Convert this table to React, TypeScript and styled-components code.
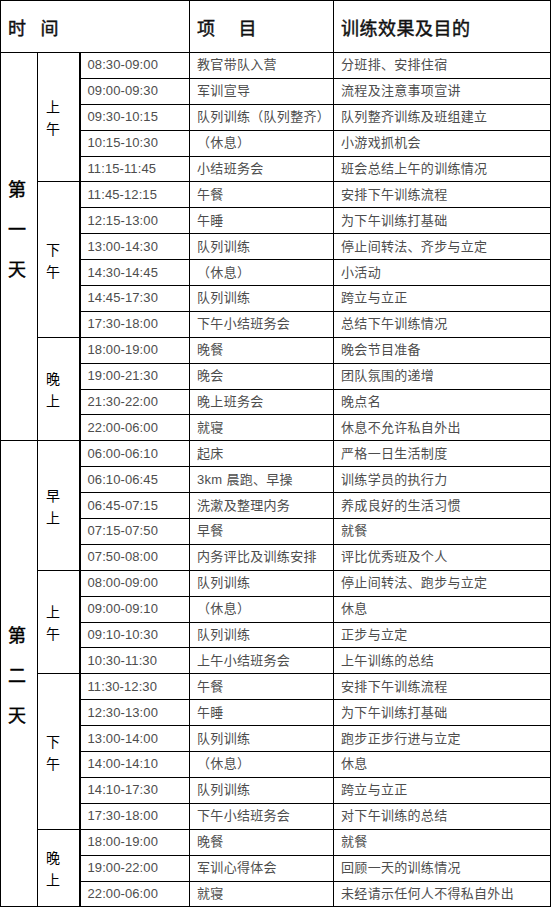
import React from 'react';
import styled, { createGlobalStyle } from 'styled-components';

const GlobalStyle = createGlobalStyle`
  html, body {
    margin: 0;
    padding: 0;
    background: #ffffff;
  }
  body {
    font-family: "Liberation Sans", "Noto Sans CJK SC", sans-serif;
  }
`;

const Table = styled.table`
  width: 550px;
  border-collapse: collapse;
  table-layout: fixed;
  border: 1px solid #000;
`;

const HeadCell = styled.th`
  height: 51px;
  padding: 0 0 0 7px;
  border: 1px solid #000;
  text-align: left;
  font-family: "Noto Sans CJK SC", sans-serif;
  font-size: 18px;
  font-weight: 400;
  -webkit-text-stroke: 0.45px #111;
  color: #111;
  letter-spacing: 0.5px;
`;

const Gap = styled.span<{ $w: number }>`
  display: inline-block;
  width: ${(p) => p.$w}px;
`;

const Row = styled.tr`
  height: 25.9px;
`;

const DayCell = styled.td<{ $shift?: number }>`
  padding: 0 0 ${(p) => p.$shift || 0}px 7px;
  border: 1px solid #000;
  vertical-align: middle;
  font-family: "Noto Sans CJK SC", sans-serif;
  font-size: 18px;
  font-weight: 400;
  -webkit-text-stroke: 0.45px #000;
  line-height: 40px;
  color: #000;
`;

const PeriodCell = styled.td`
  padding: 0 0 0 8px;
  border: 1px solid #000;
  border-right: 2px solid #000;
  vertical-align: middle;
  font-family: "Noto Sans CJK SC", sans-serif;
  font-size: 14px;
  line-height: 22px;
  color: #000;
`;

const Cell = styled.td`
  padding: 0 0 0 7px;
  border: 1px solid #000;
  font-size: 13px;
  line-height: 16px;
  color: #4d4d4d;
  letter-spacing: 0.3px;
  white-space: nowrap;
  overflow: hidden;
`;

const TimeCell = styled(Cell)`
  letter-spacing: 0.1px;
`;

type Item = [string, string, string];

interface Period {
  label: string[];
  items: Item[];
}

interface Day {
  label: string[];
  shift: number;
  periods: Period[];
}

const days: Day[] = [
  {
    label: ['第', '一', '天'],
    shift: 38,
    periods: [
      {
        label: ['上', '午'],
        items: [
          ['08:30-09:00', '教官带队入营', '分班排、安排住宿'],
          ['09:00-09:30', '军训宣导', '流程及注意事项宣讲'],
          ['09:30-10:15', '队列训练（队列整齐）', '队列整齐训练及班组建立'],
          ['10:15-10:30', '（休息）', '小游戏抓机会'],
          ['11:15-11:45', '小结班务会', '班会总结上午的训练情况'],
        ],
      },
      {
        label: ['下', '午'],
        items: [
          ['11:45-12:15', '午餐', '安排下午训练流程'],
          ['12:15-13:00', '午睡', '为下午训练打基础'],
          ['13:00-14:30', '队列训练', '停止间转法、齐步与立定'],
          ['14:30-14:45', '（休息）', '小活动'],
          ['14:45-17:30', '队列训练', '跨立与立正'],
          ['17:30-18:00', '下午小结班务会', '总结下午训练情况'],
        ],
      },
      {
        label: ['晚', '上'],
        items: [
          ['18:00-19:00', '晚餐', '晚会节目准备'],
          ['19:00-21:30', '晚会', '团队氛围的递增'],
          ['21:30-22:00', '晚上班务会', '晚点名'],
          ['22:00-06:00', '就寝', '休息不允许私自外出'],
        ],
      },
    ],
  },
  {
    label: ['第', '二', '天'],
    shift: 0,
    periods: [
      {
        label: ['早', '上'],
        items: [
          ['06:00-06:10', '起床', '严格一日生活制度'],
          ['06:10-06:45', '3km 晨跑、早操', '训练学员的执行力'],
          ['06:45-07:15', '洗漱及整理内务', '养成良好的生活习惯'],
          ['07:15-07:50', '早餐', '就餐'],
          ['07:50-08:00', '内务评比及训练安排', '评比优秀班及个人'],
        ],
      },
      {
        label: ['上', '午'],
        items: [
          ['08:00-09:00', '队列训练', '停止间转法、跑步与立定'],
          ['09:00-09:10', '（休息）', '休息'],
          ['09:10-10:30', '队列训练', '正步与立定'],
          ['10:30-11:30', '上午小结班务会', '上午训练的总结'],
        ],
      },
      {
        label: ['下', '午'],
        items: [
          ['11:30-12:30', '午餐', '安排下午训练流程'],
          ['12:30-13:00', '午睡', '为下午训练打基础'],
          ['13:00-14:00', '队列训练', '跑步正步行进与立定'],
          ['14:00-14:10', '（休息）', '休息'],
          ['14:10-17:30', '队列训练', '跨立与立正'],
          ['17:30-18:00', '下午小结班务会', '对下午训练的总结'],
        ],
      },
      {
        label: ['晚', '上'],
        items: [
          ['18:00-19:00', '晚餐', '就餐'],
          ['19:00-22:00', '军训心得体会', '回顾一天的训练情况'],
          ['22:00-06:00', '就寝', '未经请示任何人不得私自外出'],
        ],
      },
    ],
  },
];

const Stack: React.FC<{ chars: string[] }> = ({ chars }) => (
  <>
    {chars.map((c, i) => (
      <div key={i}>{c}</div>
    ))}
  </>
);

const App: React.FC = () => {
  return (
    <>
      <GlobalStyle />
      <Table>
        <colgroup>
          <col style={{ width: 37 }} />
          <col style={{ width: 42 }} />
          <col style={{ width: 110 }} />
          <col style={{ width: 144 }} />
          <col style={{ width: 217 }} />
        </colgroup>
        <thead>
          <tr>
            <HeadCell colSpan={3}>
              时<Gap $w={14} />间
            </HeadCell>
            <HeadCell>
              项<Gap $w={23} />目
            </HeadCell>
            <HeadCell>训练效果及目的</HeadCell>
          </tr>
        </thead>
        <tbody>
          {days.map((day) => {
            const dayRows = day.periods.reduce((n, p) => n + p.items.length, 0);
            return day.periods.map((period, pi) =>
              period.items.map((item, ii) => (
                <Row key={`${day.label[1]}-${pi}-${ii}`}>
                  {pi === 0 && ii === 0 && (
                    <DayCell rowSpan={dayRows} $shift={day.shift}>
                      <Stack chars={day.label} />
                    </DayCell>
                  )}
                  {ii === 0 && (
                    <PeriodCell rowSpan={period.items.length}>
                      <Stack chars={period.label} />
                    </PeriodCell>
                  )}
                  <TimeCell>{item[0]}</TimeCell>
                  <Cell>{item[1]}</Cell>
                  <Cell>{item[2]}</Cell>
                </Row>
              ))
            );
          })}
        </tbody>
      </Table>
    </>
  );
};

export default App;
